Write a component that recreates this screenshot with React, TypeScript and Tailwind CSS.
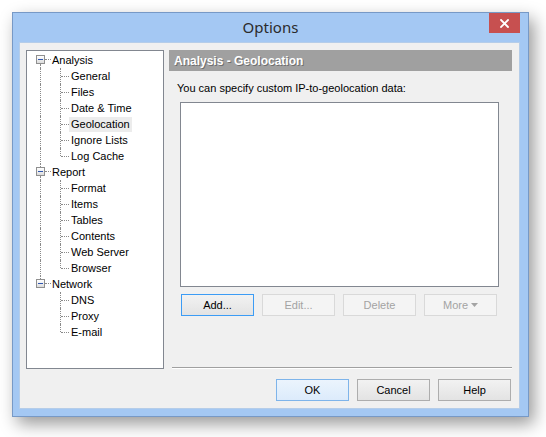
import React from 'react'

interface TreeNode {
  label: string
  children: string[]
}

const tree: TreeNode[] = [
  {
    label: 'Analysis',
    children: ['General', 'Files', 'Date & Time', 'Geolocation', 'Ignore Lists', 'Log Cache'],
  },
  {
    label: 'Report',
    children: ['Format', 'Items', 'Tables', 'Contents', 'Web Server', 'Browser'],
  },
  {
    label: 'Network',
    children: ['DNS', 'Proxy', 'E-mail'],
  },
]

const selected = 'Geolocation'

const line = 'absolute border-dotted border-[#8a8a8a]'

function ParentRow({ label, first, last }: { label: string; first: boolean; last: boolean }) {
  return (
    <div className="relative flex h-[16px] items-center pl-[25px]">
      {!first && <span className={`${line} left-[13px] top-0 h-[3px] border-l`} />}
      {!last && <span className={`${line} left-[13px] top-[12px] h-[4px] border-l`} />}
      <span className="absolute left-[9px] top-[3px] flex h-[9px] w-[9px] items-center justify-center border border-[#8f8f8f] bg-gradient-to-b from-white to-[#dcdcdc]">
        <span className="h-px w-[5px] bg-[#2f56b0]" />
      </span>
      <span className={`${line} left-[18px] top-[7px] w-[6px] border-t`} />
      <span>{label}</span>
    </div>
  )
}

function ChildRow({ label, lastChild, lastParent }: { label: string; lastChild: boolean; lastParent: boolean }) {
  const isSel = label === selected
  return (
    <div className="relative flex h-[16px] items-center pl-[42px]">
      {!lastParent && <span className={`${line} left-[13px] top-0 h-[16px] border-l`} />}
      <span className={`${line} left-[33px] top-0 border-l ${lastChild ? 'h-[8px]' : 'h-[16px]'}`} />
      <span className={`${line} left-[34px] top-[8px] w-[8px] border-t`} />
      <span className={`px-[2px] leading-[15px] ${isSel ? 'bg-[#ececec]' : ''}`}>{label}</span>
    </div>
  )
}

function Button({
  children,
  disabled,
  variant,
}: {
  children: React.ReactNode
  disabled?: boolean
  variant?: 'focus' | 'default'
}) {
  let cls = 'border-[#adadad] bg-gradient-to-b from-[#f2f2f2] to-[#e3e3e3] text-black'
  if (disabled) cls = 'border-[#d9d9d9] bg-[#f4f4f4] text-[#a3a3a3]'
  if (variant === 'focus') cls = 'border-[#3c9cf5] bg-gradient-to-b from-[#f2f2f2] to-[#e3e3e3] text-black'
  if (variant === 'default') cls = 'border-[#7eb4ea] bg-gradient-to-b from-[#ebf4fd] to-[#dcebfb] text-black'
  return (
    <button className={`flex h-[22px] w-[73px] items-center justify-center border text-[11px] ${cls}`}>
      {children}
    </button>
  )
}

export default function App() {
  return (
    <main
      className="h-[437px] w-[546px] overflow-hidden bg-white pl-[12px] pt-[12px]"
      style={{ fontFamily: '"Liberation Sans", Arial, sans-serif' }}
    >
      {/* Window frame */}
      <div className="flex h-[405px] w-[517px] flex-col border border-[#7799c6] bg-[#a4c8f3] shadow-[5px_7px_16px_rgba(0,0,0,0.4)]">
        {/* Title bar */}
        <div className="relative flex h-[29px] shrink-0 items-center justify-center">
          <span
            className="pb-[1px] text-[15px] text-[#2b2b2b]"
            style={{ fontFamily: '"Noto Sans", "Open Sans", sans-serif' }}
          >
            Options
          </span>
          <button className="absolute right-[8px] top-0 flex h-[20px] w-[31px] items-center justify-center bg-[#c75050]">
            <svg width="9" height="9" viewBox="0 0 9 9">
              <path d="M1 1 L8 8 M8 1 L1 8" stroke="white" strokeWidth="1.8" strokeLinecap="square" />
            </svg>
          </button>
        </div>

        {/* Client area */}
        <div className="ml-[6px] mr-[8px] flex h-[367px] border border-[#b5cde9] bg-[#f0f0f0] text-[11px] text-black">
          {/* Tree */}
          <div className="ml-[6px] mt-[7px] h-[319px] w-[138px] border border-[#828790] bg-white pt-[1px] text-[11px]">
            {tree.map((node, i) => (
              <div key={node.label}>
                <ParentRow label={node.label} first={i === 0} last={i === tree.length - 1} />
                {node.children.map((c, j) => (
                  <ChildRow
                    key={c}
                    label={c}
                    lastChild={j === node.children.length - 1}
                    lastParent={i === tree.length - 1}
                  />
                ))}
              </div>
            ))}
          </div>

          {/* Right panel */}
          <div className="ml-[5px] mt-[7px] flex w-[343px] flex-col">
            <div className="flex h-[21px] items-center bg-[#a0a0a0] pl-[5px]">
              <span className="text-[12px] font-bold text-white [text-shadow:1px_1px_0_#6f6f6f]">
                Analysis - Geolocation
              </span>
            </div>

            <p className="ml-[8px] mt-[9px] text-[11px] leading-[16px]">
              You can specify custom IP-to-geolocation data:
            </p>

            <div className="ml-[11px] mt-[6px] h-[185px] w-[319px] border border-[#828790] bg-white" />

            <div className="ml-[12px] mt-[7px] flex gap-[8px]">
              <Button variant="focus">Add...</Button>
              <Button disabled>Edit...</Button>
              <Button disabled>Delete</Button>
              <Button disabled>
                <span className="flex items-center gap-[3px]">
                  More
                  <svg width="7" height="4" viewBox="0 0 7 4">
                    <path d="M0 0 L7 0 L3.5 4 Z" fill="#a3a3a3" />
                  </svg>
                </span>
              </Button>
            </div>

            <div className="ml-[3px] mt-[51px] h-[2px] border-t border-b border-t-[#a0a0a0] border-b-white" />

            <div className="mt-[10px] flex justify-end gap-[8px] pr-[1px]">
              <Button variant="default">OK</Button>
              <Button>Cancel</Button>
              <Button>Help</Button>
            </div>
          </div>
        </div>
      </div>
    </main>
  )
}
